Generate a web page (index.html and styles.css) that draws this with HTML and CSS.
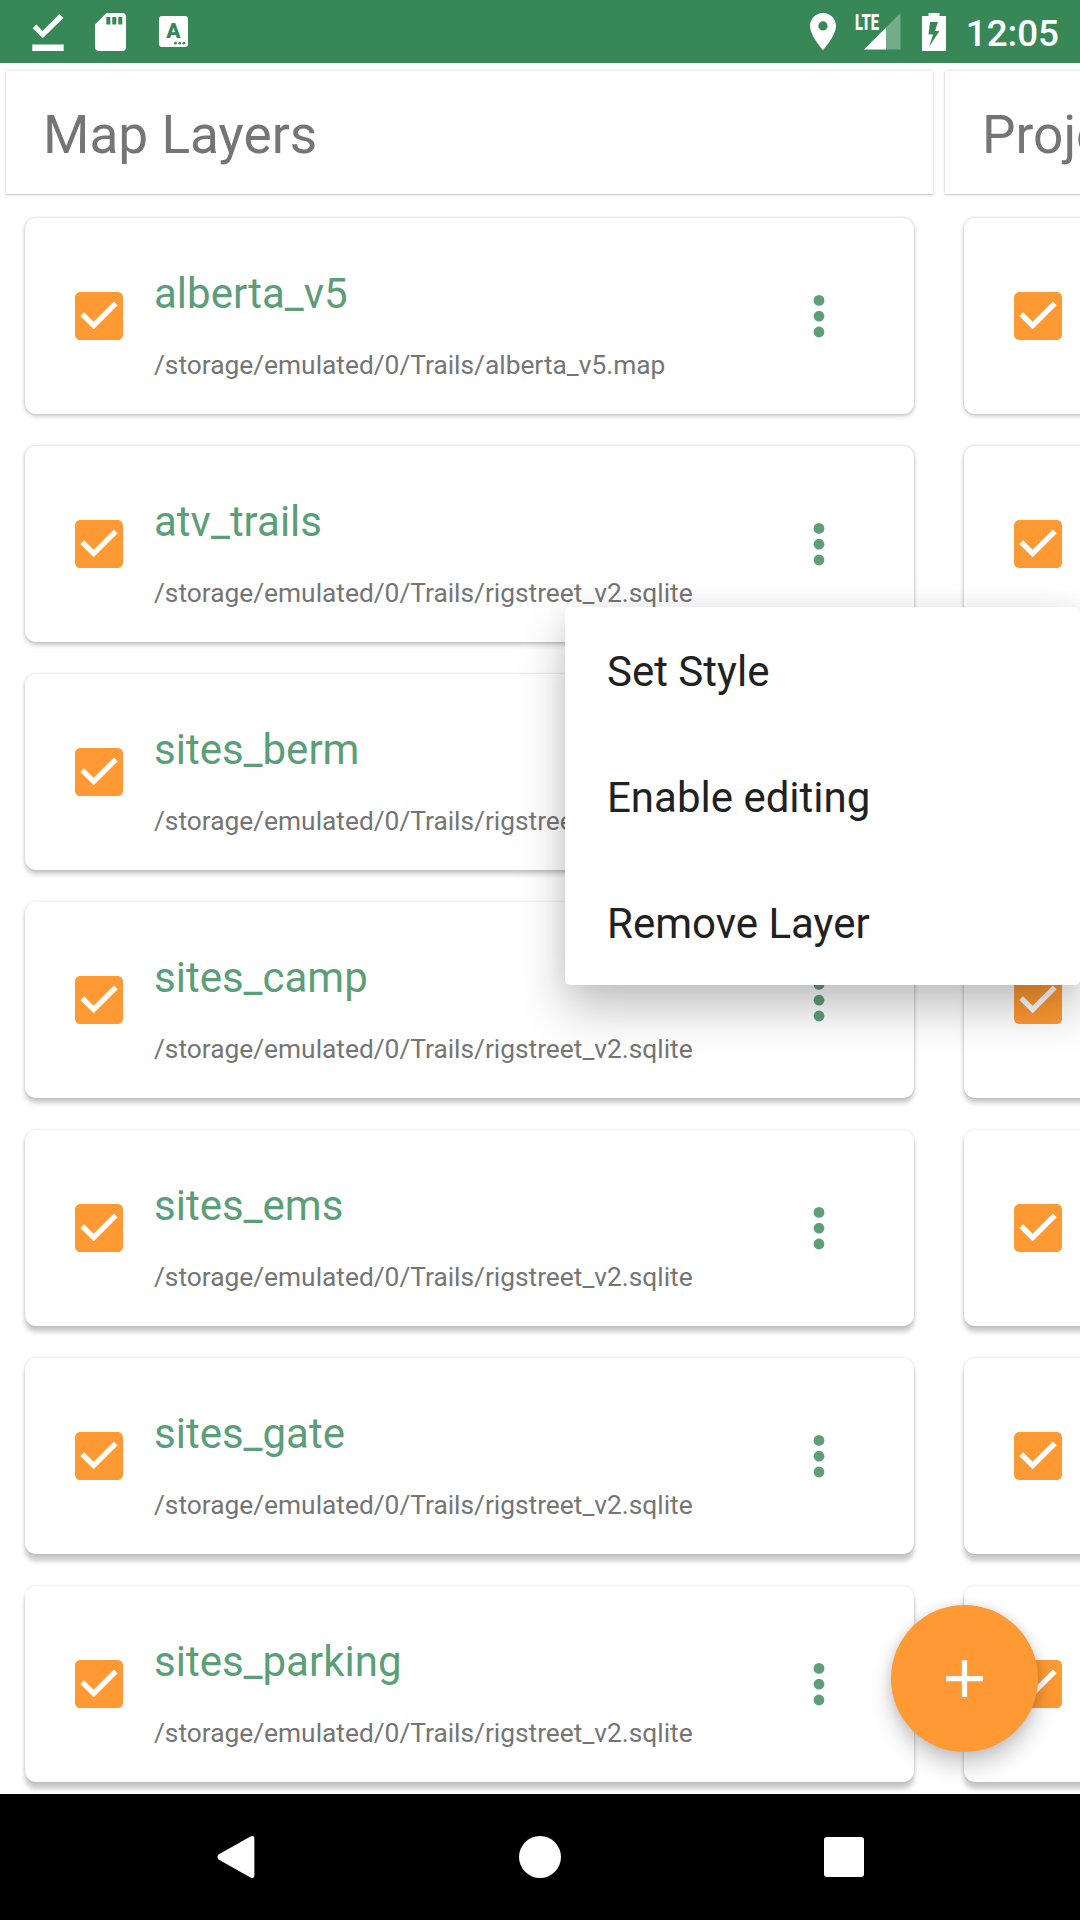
FILE: index.html
```html
<!DOCTYPE html>
<html lang="en">
<head>
<meta charset="utf-8">
<title>Map Layers</title>
<link rel="stylesheet" href="styles.css">
</head>
<body>
<svg class="sprite" aria-hidden="true">
  <symbol id="check" viewBox="3 3 18 18"><path d="M19 3H5c-1.11 0-2 .9-2 2v14c0 1.1.89 2 2 2h14c1.11 0 2-.9 2-2V5c0-1.1-.89-2-2-2zm-9 14l-5-5 1.41-1.41L10 14.17l7.59-7.59L19 8l-9 9z"/></symbol>
  <symbol id="more" viewBox="0 0 12 44"><circle cx="6" cy="6.400" r="5.400"/><circle cx="6" cy="22.200" r="5.400"/><circle cx="6" cy="38" r="5.400"/></symbol>
</svg>
<div class="screen">
  <header class="status">
    <div class="status-left">
      <svg class="ic-done" viewBox="0 0 32 38"><path d="M.7 15.2l3.6-3.6 6.4 6.3L27.300 1l4 4L10.700 25.300zM.3 31.500h31.400V38H.3z"/></svg>
      <svg class="ic-sd" viewBox="0 0 31 38"><path fill-rule="evenodd" d="M11.500 0H27q4 0 4 4v30q0 4-4 4H4q-4 0-4-4V11.500zM11.300 4v7.500h4V4zM17.300 4v7.500h4V4zM23.300 4v7.500h4V4z"/></svg>
      <svg class="ic-lang" viewBox="0 0 29 31"><rect width="29" height="31" rx="3"/><text x="14.300" y="22.400">A</text><circle cx="16.500" cy="27.200" r="1.400"/><circle cx="20.700" cy="27.200" r="1.400"/><circle cx="24.900" cy="27.200" r="1.400"/></svg>
    </div>
    <div class="status-right">
      <svg class="ic-pin" viewBox="5 2 14 20" preserveAspectRatio="none"><path d="M12 2C8.130 2 5 5.130 5 9c0 5.250 7 13 7 13s7-7.750 7-13c0-3.870-3.130-7-7-7zm0 9.500a2.500 2.500 0 0 1 0-5 2.500 2.500 0 0 1 0 5z"/></svg>
      <svg class="ic-signal" viewBox="0 0 46 37"><path d="M9 36.500L31 14.500v22z"/><path class="dim" d="M31 14.500L45.500 0v36.500H31z"/><text x="0" y="16.500" textLength="24" lengthAdjust="spacingAndGlyphs">LTE</text></svg>
      <svg class="ic-battery" viewBox="0 0 24 38"><path fill-rule="evenodd" d="M6.500 0h11v3H24v35H0V3h6.500zM8 9l-1.500 12.500h4.500L7 34 17.500 18H13l3-9z"/></svg>
      <span class="clock">12:05</span>
    </div>
  </header>

  <main class="board">
    <section class="column">
      <h1 class="column-title">Map Layers</h1>
      <ul class="cards">
        <li class="card"><svg class="checkbox"><use href="#check"/></svg><div class="info"><div class="name">alberta_v5</div><div class="path">/storage/emulated/0/Trails/alberta_v5.map</div></div><svg class="more"><use href="#more"/></svg></li>
        <li class="card"><svg class="checkbox"><use href="#check"/></svg><div class="info"><div class="name">atv_trails</div><div class="path">/storage/emulated/0/Trails/rigstreet_v2.sqlite</div></div><svg class="more"><use href="#more"/></svg></li>
        <li class="card"><svg class="checkbox"><use href="#check"/></svg><div class="info"><div class="name">sites_berm</div><div class="path">/storage/emulated/0/Trails/rigstreet_v2.sqlite</div></div><svg class="more"><use href="#more"/></svg></li>
        <li class="card"><svg class="checkbox"><use href="#check"/></svg><div class="info"><div class="name">sites_camp</div><div class="path">/storage/emulated/0/Trails/rigstreet_v2.sqlite</div></div><svg class="more"><use href="#more"/></svg></li>
        <li class="card"><svg class="checkbox"><use href="#check"/></svg><div class="info"><div class="name">sites_ems</div><div class="path">/storage/emulated/0/Trails/rigstreet_v2.sqlite</div></div><svg class="more"><use href="#more"/></svg></li>
        <li class="card"><svg class="checkbox"><use href="#check"/></svg><div class="info"><div class="name">sites_gate</div><div class="path">/storage/emulated/0/Trails/rigstreet_v2.sqlite</div></div><svg class="more"><use href="#more"/></svg></li>
        <li class="card"><svg class="checkbox"><use href="#check"/></svg><div class="info"><div class="name">sites_parking</div><div class="path">/storage/emulated/0/Trails/rigstreet_v2.sqlite</div></div><svg class="more"><use href="#more"/></svg></li>
      </ul>
    </section>
    <section class="column">
      <h1 class="column-title">Projects</h1>
      <ul class="cards">
        <li class="card"><svg class="checkbox"><use href="#check"/></svg></li>
        <li class="card"><svg class="checkbox"><use href="#check"/></svg></li>
        <li class="card"><svg class="checkbox"><use href="#check"/></svg></li>
        <li class="card"><svg class="checkbox"><use href="#check"/></svg></li>
        <li class="card"><svg class="checkbox"><use href="#check"/></svg></li>
        <li class="card"><svg class="checkbox"><use href="#check"/></svg></li>
        <li class="card"><svg class="checkbox"><use href="#check"/></svg></li>
      </ul>
    </section>
  </main>

  <nav class="navbar">
    <svg class="nav-icon" viewBox="0 0 42 42"><path d="M3.500 18.600L35.500.6Q39.400-1.500 39.400 3v36q0 4.500-3.900 2.400L3.500 23.400Q1.400 21 3.500 18.600z"/></svg>
    <svg class="nav-icon" viewBox="0 0 42 42"><circle cx="21" cy="21" r="21"/></svg>
    <svg class="nav-icon" viewBox="0 0 42 42"><rect x="1" y="1" width="40" height="40" rx="3"/></svg>
  </nav>

  <button class="fab" aria-label="Add"><svg viewBox="0 0 24 24"><path d="M19 13h-6v6h-2v-6H5v-2h6V5h2v6h6v2z"/></svg></button>

  <ul class="menu">
    <li>Set Style</li>
    <li>Enable editing</li>
    <li>Remove Layer</li>
  </ul>
</div>
</body>
</html>
```
FILE: styles.css
```css
* { box-sizing: border-box; }
body { margin: 0; background: #fff; font-family: Roboto, sans-serif; }
ul { list-style: none; margin: 0; padding: 0; }
svg { display: block; flex: none; }
.sprite { position: absolute; width: 0; height: 0; }

.screen {
  position: relative;
  width: 1080px;
  height: 1920px;
  overflow: hidden;
  display: flex;
  flex-direction: column;
}

/* Status bar */
.status {
  flex: none;
  height: 63px;
  padding: 0 21px 0 32px;
  background: #388857;
  color: #fff;
  fill: #fff;
  display: flex;
  justify-content: space-between;
}
.status-left, .status-right { display: flex; align-items: center; }
.ic-done { width: 32px; height: 38px; }
.ic-sd { width: 31px; height: 38px; margin-left: 31px; }
.ic-lang { width: 29px; height: 31px; margin-left: 33px; }
.ic-lang text { font-size: 21px; font-weight: 900; text-anchor: middle; fill: #388857; }
.ic-lang circle { fill: #388857; }
.ic-pin { width: 26px; height: 37px; }
.ic-signal { width: 46px; height: 37px; margin-left: 19px; overflow: visible; }
.ic-signal .dim { opacity: .3; }
.ic-signal text { font-size: 22px; font-weight: 900; }
.ic-battery { width: 24px; height: 38px; margin: 0 20px 0 21px; }
.clock { font-size: 36.75px; font-weight: 500; line-height: 63px; padding-top: 3px; }

/* Columns */
.board { flex: 1; min-height: 0; overflow: hidden; display: flex; }
.column { flex: none; width: 939px; padding-top: 8px; }
.column-title {
  margin: 0 6px;
  height: 123px;
  padding-left: 37px;
  background: #fff;
  font-size: 53.2px;
  font-weight: 400;
  line-height: 129px;
  color: #757575;
  box-shadow: 0 0 3px rgba(0, 0, 0, .2), 0 1px 1px rgba(0, 0, 0, .12);
}
.cards { padding: 24px 25px 0; display: flex; flex-direction: column; gap: 32px; }
.card {
  height: 196px;
  padding: 0 89px 0 50px;
  background: #fff;
  border-radius: 11px;
  display: flex;
  align-items: center;
  box-shadow: 0 var(--drop) 5px rgba(0, 0, 0, .21), 0 0 3px rgba(0, 0, 0, .15);
}
.card:nth-child(1) { --drop: 2px; }
.card:nth-child(2) { --drop: 2.8px; }
.card:nth-child(3) { --drop: 3.6px; }
.card:nth-child(4) { --drop: 4.4px; }
.card:nth-child(5) { --drop: 5.2px; }
.card:nth-child(6) { --drop: 6.1px; }
.card:nth-child(7) { --drop: 7px; }
.checkbox { width: 48px; height: 48px; fill: #ff9933; }
.info { flex: 1; margin-left: 31px; padding-top: 18px; }
.name { font-size: 42px; line-height: 50px; color: #5b9e77; }
.path { margin-top: 30px; font-size: 26.32px; line-height: 32px; color: #757575; white-space: nowrap; }
.more { width: 12px; height: 44px; fill: #5f9f78; }

/* Bottom navigation */
.navbar {
  position: relative;
  flex: none;
  height: 126px;
  background: #000;
  fill: #fff;
  display: flex;
  justify-content: center;
  align-items: center;
  gap: 262px;
}
.nav-icon { width: 42px; height: 42px; }

/* Overlays */
.fab {
  position: absolute;
  left: 891px;
  top: 1605px;
  width: 147px;
  height: 147px;
  padding: 0;
  border: 0;
  border-radius: 50%;
  background: #ff9933;
  display: grid;
  place-items: center;
  box-shadow: 0 14px 22px rgba(0, 0, 0, .2), 0 0 12px rgba(0, 0, 0, .12);
}
.fab svg { width: 63px; height: 63px; fill: #fff; }
.menu {
  position: absolute;
  left: 565px;
  top: 607px;
  width: 515px;
  background: #fff;
  border-radius: 5px;
  box-shadow: 0 24px 48px rgba(0, 0, 0, .24), 0 0 24px rgba(0, 0, 0, .06);
}
.menu li { height: 126px; padding-left: 42px; font-size: 42px; line-height: 130px; color: #212121; }
```
